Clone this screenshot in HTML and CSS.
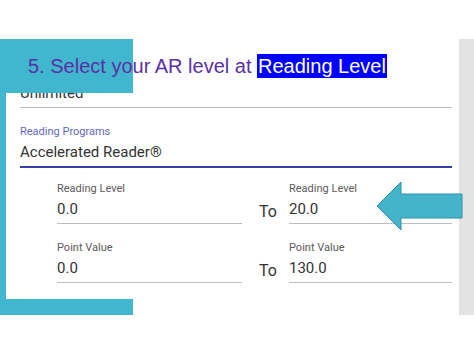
FILE: index.html
```html
<!DOCTYPE html>
<html lang="en">
<head>
    <meta charset="UTF-8">
    <meta name="viewport" content="width=device-width, initial-scale=1.0">
    <title>Select your AR level</title>
    <link rel="stylesheet" href="styles.css">
</head>
<body>
    <div class="slide">
        <div class="board">
            <div class="sheet">
                <div class="form">
                    <div class="field">
                        <div class="value">Unlimited</div>
                    </div>
                    <div class="field focused">
                        <div class="label">Reading Programs</div>
                        <div class="value">Accelerated Reader®</div>
                    </div>
                    <div class="range">
                        <div class="field">
                            <div class="label">Reading Level</div>
                            <div class="value">0.0</div>
                        </div>
                        <div class="to">To</div>
                        <div class="field">
                            <div class="label">Reading Level</div>
                            <div class="value">20.0</div>
                        </div>
                    </div>
                    <div class="range">
                        <div class="field">
                            <div class="label">Point Value</div>
                            <div class="value">0.0</div>
                        </div>
                        <div class="to">To</div>
                        <div class="field">
                            <div class="label">Point Value</div>
                            <div class="value">130.0</div>
                        </div>
                    </div>
                </div>
                <div class="bottom-bar"></div>
            </div>
            <div class="side"></div>
        </div>

        <div class="title-box"></div>
        <h1 class="title">5. Select your AR level at <span class="mark">Reading Level</span></h1>

        <svg class="arrow" viewBox="0 0 88 52" width="88" height="52">
            <path d="M1 25 L25 1 V13 H86 V37 H25 V49 Z" fill="#45b4ca" stroke="#2f93a8" stroke-width="1"/>
        </svg>
    </div>
</body>
</html>
```

FILE: styles.css
```css
body {
    margin: 0;
    padding: 0;
    background: #fff;
    font-family: Roboto, "Liberation Sans", sans-serif;
}
.slide {
    position: relative;
    width: 474px;
    height: 355px;
    overflow: hidden;
    background: #fff;
}
.board {
    display: flex;
    margin-top: 39px;
    height: 276px;
}
.sheet {
    flex: 1;
    display: flex;
    flex-direction: column;
}
.form {
    flex: 1;
    border-left: 6px solid #41b6cf;
    padding: 45px 7px 0 14px;
}
.bottom-bar {
    width: 133px;
    height: 16px;
    background: #41b6cf;
}
.side {
    width: 15px;
    background: #e3e3e3;
}
.field {
    border-bottom: 1px solid #bdbdbd;
    padding-bottom: 5px;
}
.field.focused {
    margin-top: 17px;
    border-bottom: 2px solid #3b3ba6;
}
.label {
    font-size: 11px;
    line-height: 14px;
    color: #5a5a5a;
    margin-bottom: 4px;
}
.focused .label {
    color: #5f68c2;
}
.value {
    font-size: 15px;
    line-height: 18px;
    color: #333;
}
.range {
    display: grid;
    grid-template-columns: 185px 47px 1fr;
    padding-left: 37px;
    margin-top: 14px;
}
.range + .range {
    margin-top: 17px;
}
.to {
    align-self: end;
    padding-left: 17px;
    margin-bottom: 3px;
    font-size: 16px;
    line-height: 18px;
    color: #333;
}

/* slide overlays */
.title-box {
    position: absolute;
    left: 0;
    top: 39px;
    width: 133px;
    height: 54px;
    background: #41b6cf;
}
.title {
    position: absolute;
    left: 28px;
    top: 54px;
    margin: 0;
    font-family: "Liberation Sans", Arial, sans-serif;
    font-size: 20px;
    line-height: 24px;
    font-weight: normal;
    color: #5b2fa4;
    white-space: nowrap;
}
.mark {
    background: #0000ff;
    color: #fff;
    padding: 1px 1px;
}
.arrow {
    position: absolute;
    left: 376px;
    top: 181px;
}
```
